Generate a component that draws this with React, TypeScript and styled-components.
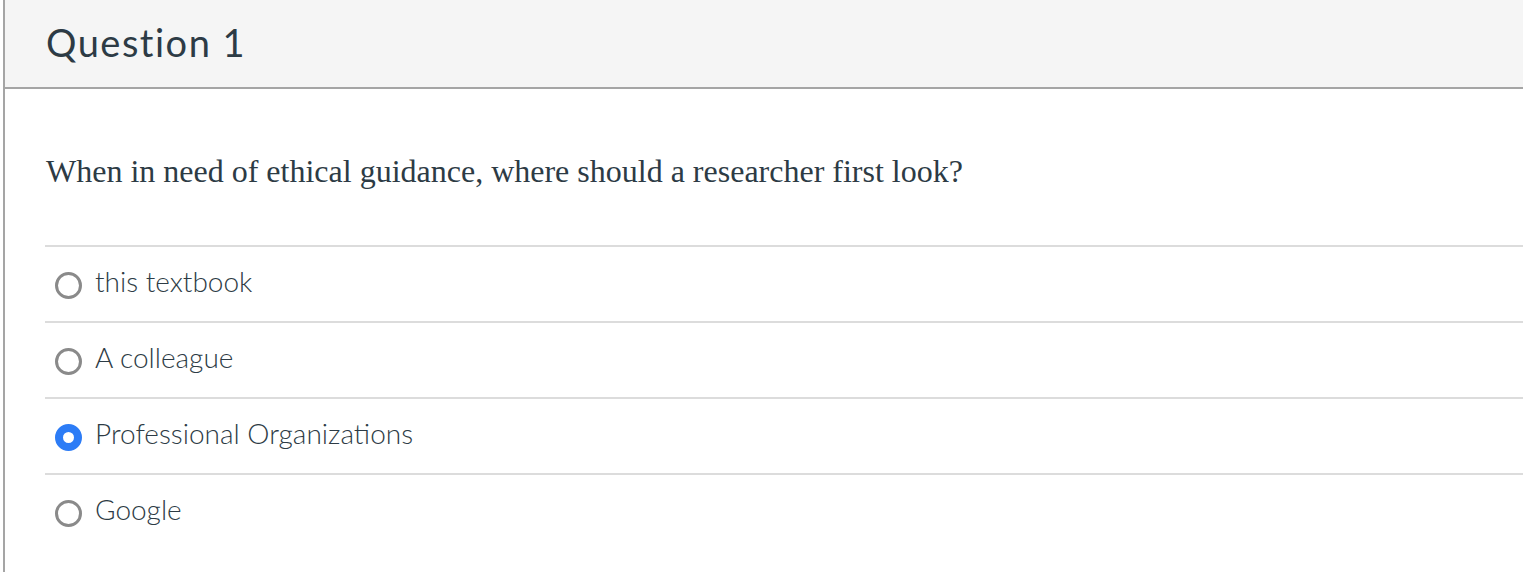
import React from "react";
import styled, { createGlobalStyle } from "styled-components";

const Global = createGlobalStyle`
  html, body { margin: 0; padding: 0; background: #ffffff; }
  body { overflow: hidden; }
`;

const Panel = styled.div`
  margin-left: 3px;
  border-left: 2px solid #a5a5a5;
  min-height: 572px;
  box-sizing: border-box;
  background: #fff;
`;

const Header = styled.div`
  height: 87px;
  background: #f5f5f5;
  border-bottom: 2px solid #a5a5a5;
  display: flex;
  align-items: center;
  padding-left: 41px;
  box-sizing: content-box;
`;

const Title = styled.h2`
  margin: 0;
  font-family: Lato, "Liberation Sans", sans-serif;
  font-weight: 400;
  font-size: 38px;
  color: #2d3b45;
  letter-spacing: 1.5px;
  padding-bottom: 4px;
`;

const Body = styled.div`
  padding: 0 0 0 40px;
`;

const Prompt = styled.p`
  margin: 0;
  padding: 62px 0 0 1px;
  height: 94px;
  font-family: "Liberation Serif", "Times New Roman", serif;
  font-size: 32px;
  color: #2d3b45;
  line-height: 40px;
`;

const Options = styled.div`
  display: flex;
  flex-direction: column;
`;

const Option = styled.label`
  display: flex;
  align-items: center;
  gap: 13px;
  height: 74px;
  border-top: 2px solid #dcdcdc;
  padding-left: 10px;
  cursor: pointer;
`;

const Radio = styled.span<{ $checked?: boolean }>`
  width: 27px;
  height: 27px;
  border-radius: 50%;
  box-sizing: border-box;
  flex: none;
  margin-top: 2px;
  ${(p) =>
    p.$checked
      ? `border: 8px solid #2c7cf6; background: #fff;`
      : `border: 3px solid #8a8a8a; background: #fff;`}
`;

const OptionText = styled.span`
  font-family: Lato, "Liberation Sans", sans-serif;
  font-weight: 300;
  font-size: 28px;
  color: #2d3b45;
  padding-bottom: 6px;
`;

const answers = [
  { text: "this textbook", checked: false },
  { text: "A colleague", checked: false },
  { text: "Professional Organizations", checked: true },
  { text: "Google", checked: false },
];

export default function App() {
  return (
    <>
      <Global />
      <Panel>
        <Header>
          <Title>Question 1</Title>
        </Header>
        <Body>
          <Prompt>When in need of ethical guidance, where should a researcher first look?</Prompt>
          <Options>
            {answers.map((a) => (
              <Option key={a.text}>
                <Radio $checked={a.checked} />
                <OptionText>{a.text}</OptionText>
              </Option>
            ))}
          </Options>
        </Body>
      </Panel>
    </>
  );
}
